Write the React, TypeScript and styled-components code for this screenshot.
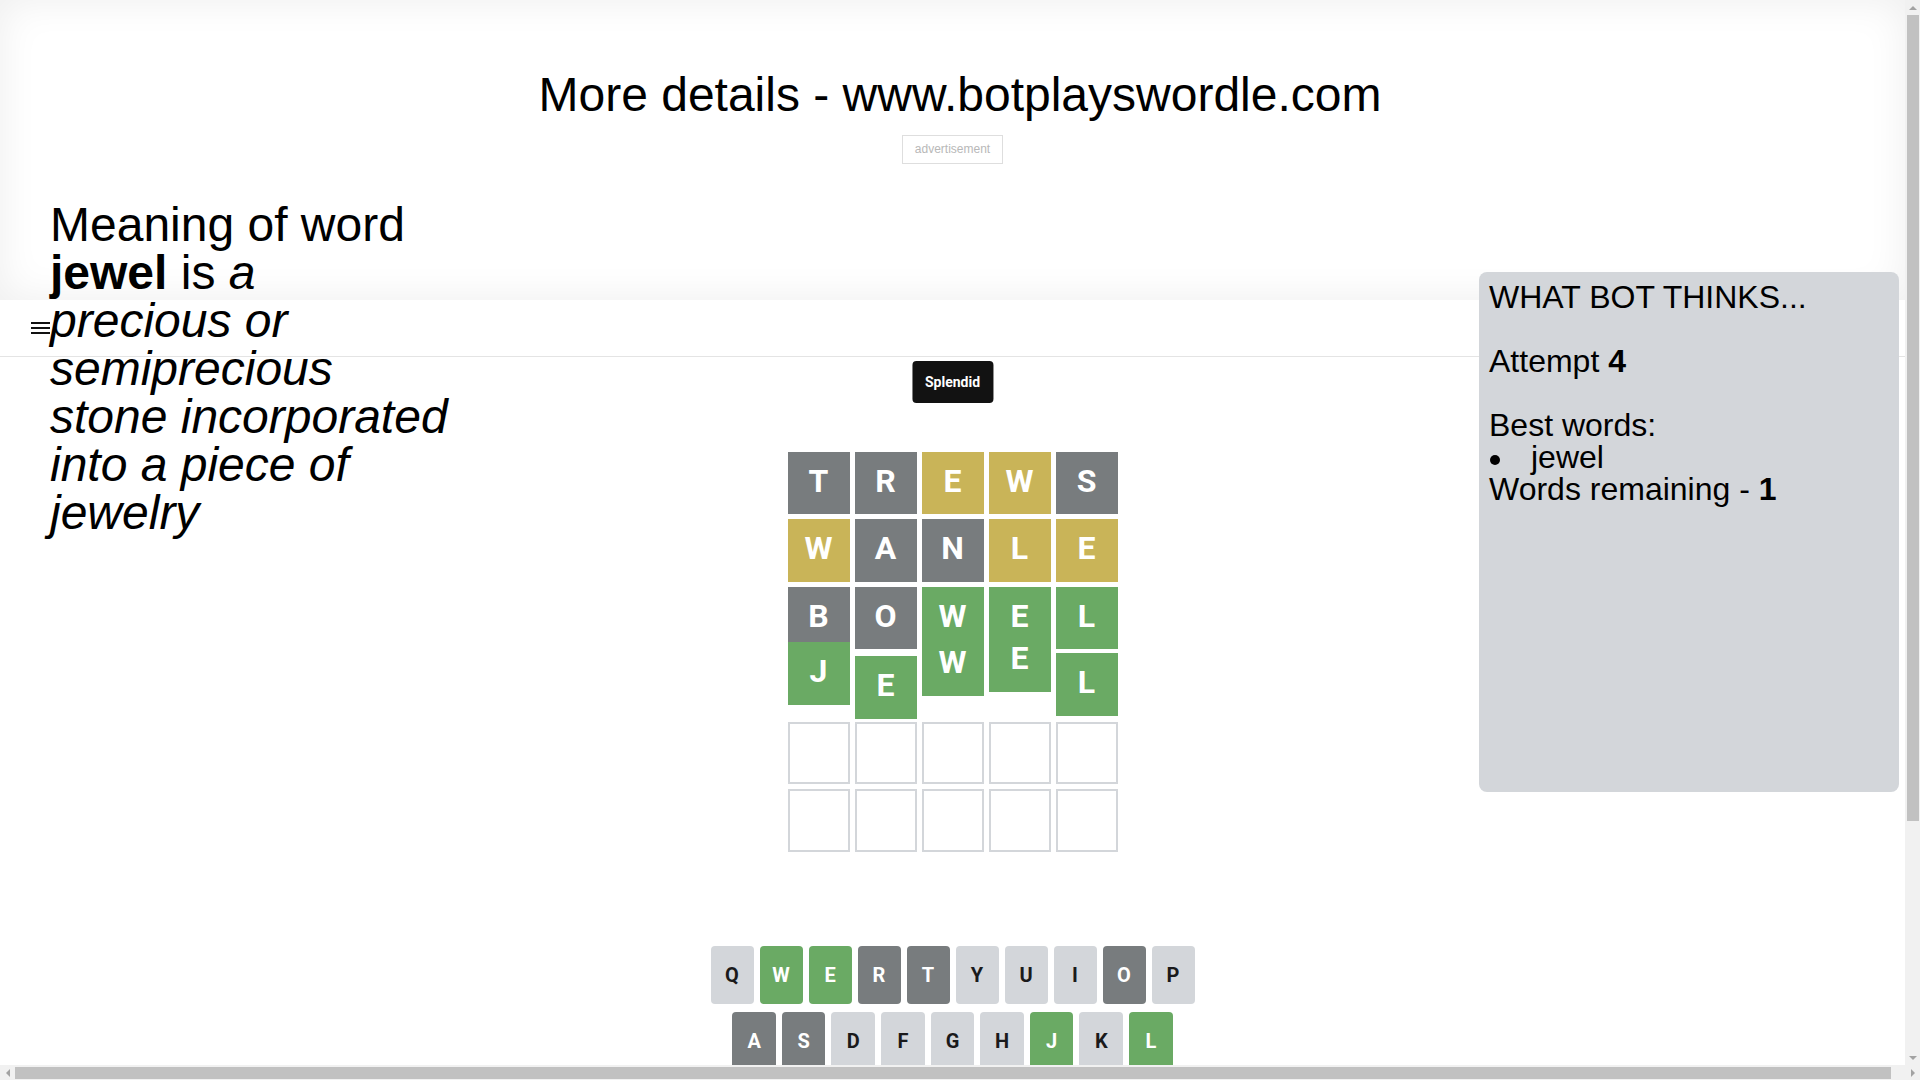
import React from "react";
import styled, { createGlobalStyle } from "styled-components";

type TileState = "absent" | "present" | "correct" | "empty";
type KeyState = "idle" | "absent" | "present" | "correct";

const COLORS = {
  absent: "#787c7e",
  present: "#c9b458",
  correct: "#6aaa64",
  idle: "#d3d6da",
  border: "#d3d6da",
};

const GlobalStyle = createGlobalStyle`
  html, body {
    margin: 0;
    padding: 0;
    overflow: hidden;
  }
  body {
    font-family: "Liberation Sans", Arial, sans-serif;
    color: #000;
    background: #fff;
  }
`;

/* ---------- browser frame with classic scrollbars ---------- */

const Frame = styled.div`
  width: 100vw;
  height: 100vh;
  display: grid;
  grid-template-columns: 1fr 15px;
  grid-template-rows: 1fr 15px;
  grid-template-areas:
    "view vbar"
    "hbar hbar";
  overflow: hidden;
`;

const Viewport = styled.div`
  grid-area: view;
  position: relative;
  overflow: hidden;
  min-width: 0;
  min-height: 0;
`;

const VScrollbar = styled.div`
  grid-area: vbar;
  background: #f1f1f1;
  display: flex;
  flex-direction: column;
`;

const HScrollbar = styled.div`
  grid-area: hbar;
  background: #f1f1f1;
  display: flex;
  flex-direction: row;
`;

const ArrowBtn = styled.div`
  flex: none;
  width: 15px;
  height: 15px;
  display: flex;
  align-items: center;
  justify-content: center;
`;

const VThumb = styled.div`
  flex: none;
  height: 806px;
  margin: 0 1px 0 2px;
  background: #c1c1c1;
`;

const HThumb = styled.div`
  flex: none;
  width: 1876px;
  margin: 2px 0 1px;
  background: #c1c1c1;
`;

const Grow = styled.div`
  flex: 1;
`;

const Arrow = ({ dir }: { dir: "up" | "down" | "left" | "right" }) => {
  const pts = {
    up: "0,4 4,0 8,4",
    down: "0,0 8,0 4,4",
    left: "4,0 4,8 0,4",
    right: "0,0 0,8 4,4",
  }[dir];
  const vertical = dir === "up" || dir === "down";
  return (
    <svg
      width={vertical ? 8 : 4}
      height={vertical ? 4 : 8}
      viewBox={vertical ? "0 0 8 4" : "0 0 4 8"}
      aria-hidden="true"
    >
      <polygon points={pts} fill="#a3a3a3" />
    </svg>
  );
};

/* ---------- page ---------- */

const Page = styled.div`
  position: relative;
  width: 100%;
`;

const TopSection = styled.section`
  height: 300px;
  box-sizing: border-box;
  padding-top: 67px;
  box-shadow: inset 0 0 40px rgba(0, 0, 0, 0.07);
  display: flex;
  flex-direction: column;
`;

const Title = styled.h1`
  width: 100vw;
  flex: none;
  margin: 0;
  font-size: 48px;
  font-weight: normal;
  text-align: center;
  line-height: normal;
  white-space: nowrap;
`;

const AdBox = styled.div`
  align-self: center;
  margin-top: 13px;
  height: 29px;
  box-sizing: border-box;
  padding: 0 12px;
  border: 1px solid #dedede;
  font-size: 12px;
  line-height: 27px;
  color: #b8b8b8;
`;

const Meaning = styled.div`
  position: absolute;
  top: 201px;
  left: 50px;
  width: 399px;
  font-size: 48px;
  line-height: 48px;
  z-index: 2;
`;

const BotPanel = styled.aside`
  position: absolute;
  top: 272px;
  right: 6px;
  width: 420px;
  height: 520px;
  box-sizing: border-box;
  padding: 9px 10px;
  background: #d3d6da;
  border-radius: 8px;
  font-size: 32px;
  line-height: 32px;
  z-index: 2;
`;

const BestList = styled.ul`
  list-style: none;
  margin: 0;
  padding: 0;
`;

const BestItem = styled.li`
  position: relative;
  padding-left: 42px;
  &::before {
    content: "";
    position: absolute;
    left: 1px;
    top: 14px;
    width: 10px;
    height: 10px;
    border-radius: 50%;
    background: #000;
  }
`;

const Game = styled.div`
  position: relative;
  height: 846px;
  display: flex;
  flex-direction: column;
  font-family: Roboto, "Liberation Sans", sans-serif;
`;

const GameHeader = styled.header`
  height: 56px;
  flex: none;
  border-bottom: 1px solid #e4e4e4;
  display: flex;
  align-items: center;
  padding: 0 31px;
`;

const MenuButton = styled.button`
  border: 0;
  background: none;
  padding: 0;
  display: flex;
  cursor: pointer;
`;

const Toast = styled.div`
  position: absolute;
  top: 61px;
  left: 50%;
  transform: translateX(-50%);
  background: #121212;
  color: #fff;
  padding: 13px;
  border-radius: 4px;
  font-size: 14px;
  font-weight: 700;
  z-index: 3;
`;

const BoardContainer = styled.div`
  flex: 1;
  display: flex;
  justify-content: center;
  align-items: center;
`;

const Board = styled.div`
  width: 330px;
  height: 400px;
  display: grid;
  grid-template-rows: repeat(6, 1fr);
  gap: 5px;
`;

const BoardRow = styled.div`
  display: grid;
  grid-template-columns: repeat(5, 1fr);
  gap: 5px;
`;

const Tile = styled.div<{ $state: TileState; $shift: number }>`
  box-sizing: border-box;
  display: flex;
  align-items: center;
  justify-content: center;
  padding-bottom: 4px;
  font-size: 32px;
  font-weight: bold;
  line-height: 1;
  text-transform: uppercase;
  color: #fff;
  background: ${(p) => (p.$state === "empty" ? "#fff" : COLORS[p.$state])};
  border: ${(p) => (p.$state === "empty" ? `2px solid ${COLORS.border}` : "none")};
  transform: translateY(${(p) => p.$shift}px);
`;

const Keyboard = styled.div`
  flex: none;
  height: 200px;
  width: 484px;
  margin: 0 auto;
`;

const KeyRow = styled.div`
  display: flex;
  width: 100%;
  margin: 0 auto 8px;
`;

const Key = styled.button<{ $state: KeyState; $wide?: boolean }>`
  font-family: inherit;
  font-weight: bold;
  font-size: ${(p) => (p.$wide ? "12px" : "20px")};
  border: 0;
  padding: 0;
  margin: 0 6px 0 0;
  height: 58px;
  border-radius: 4px;
  flex: ${(p) => (p.$wide ? 1.5 : 1)};
  display: flex;
  justify-content: center;
  align-items: center;
  text-transform: uppercase;
  background: ${(p) => COLORS[p.$state]};
  color: ${(p) => (p.$state === "idle" ? "#1a1a1b" : "#fff")};
  &:last-of-type {
    margin: 0;
  }
`;

const Half = styled.div`
  flex: 0.5;
`;

type TileData = { l: string; s: TileState; shift?: number };

const t = (word: string, states: string, shifts: number[] = []): TileData[] =>
  word.split("").map((l, i) => ({
    l,
    s: ({ a: "absent", p: "present", c: "correct", e: "empty" } as const)[
      states[i] as "a" | "p" | "c" | "e"
    ],
    shift: shifts[i] ?? 0,
  }));

const BOARD: TileData[][] = [
  t("TREWS", "aappa"),
  t("WANLE", "paapp"),
  t("BOWEL", "aaccc"),
  t("JEWEL", "ccccc", [-12, 2, -21, -25, -1]),
  t("     ", "eeeee"),
  t("     ", "eeeee"),
];

const KEY_STATES: Record<string, KeyState> = {
  W: "correct",
  E: "correct",
  J: "correct",
  L: "correct",
  R: "absent",
  T: "absent",
  O: "absent",
  A: "absent",
  S: "absent",
  N: "absent",
  B: "absent",
};

const ks = (k: string): KeyState => KEY_STATES[k] ?? "idle";

const MenuIcon = () => (
  <svg width="19" height="12" viewBox="0 0 19 12" aria-hidden="true">
    <rect x="0" y="0" width="19" height="2" fill="#111" />
    <rect x="0" y="5" width="19" height="2" fill="#111" />
    <rect x="0" y="10" width="19" height="2" fill="#111" />
  </svg>
);

const BackspaceIcon = () => (
  <svg width="24" height="24" viewBox="0 0 24 24" aria-hidden="true">
    <path
      fill="#1a1a1b"
      d="M22 3H7c-.69 0-1.23.35-1.59.88L0 12l5.41 8.11c.36.53.9.89 1.59.89h15c1.1 0 2-.9 2-2V5c0-1.1-.9-2-2-2zm0 16H7.07L2.4 12l4.66-7H22v14zm-11.59-2L14 13.41 17.59 17 19 15.59 15.41 12 19 8.41 17.59 7 14 10.59 10.41 7 9 8.41 12.59 12 9 15.59z"
    />
  </svg>
);

export default function App() {
  return (
    <Frame>
      <GlobalStyle />
      <Viewport>
        <Page>
          <TopSection>
            <Title>More details - www.botplayswordle.com</Title>
            <AdBox>advertisement</AdBox>
          </TopSection>

          <Meaning>
            Meaning of word <b>jewel</b> is{" "}
            <i>a precious or semiprecious stone incorporated into a piece of jewelry</i>
          </Meaning>

          <BotPanel>
            WHAT BOT THINKS...
            <br />
            <br />
            Attempt <b>4</b>
            <br />
            <br />
            Best words:
            <BestList>
              <BestItem>jewel</BestItem>
            </BestList>
            Words remaining - <b>1</b>
          </BotPanel>

          <Game>
            <GameHeader>
              <MenuButton aria-label="menu">
                <MenuIcon />
              </MenuButton>
            </GameHeader>
            <Toast>Splendid</Toast>
            <BoardContainer>
              <Board>
                {BOARD.map((row, r) => (
                  <BoardRow key={r}>
                    {row.map((tile, c) => (
                      <Tile key={c} $state={tile.s} $shift={tile.shift ?? 0}>
                        {tile.l.trim()}
                      </Tile>
                    ))}
                  </BoardRow>
                ))}
              </Board>
            </BoardContainer>
            <Keyboard>
              <KeyRow>
                {"QWERTYUIOP".split("").map((k) => (
                  <Key key={k} $state={ks(k)}>
                    {k}
                  </Key>
                ))}
              </KeyRow>
              <KeyRow>
                <Half />
                {"ASDFGHJKL".split("").map((k) => (
                  <Key key={k} $state={ks(k)}>
                    {k}
                  </Key>
                ))}
                <Half />
              </KeyRow>
              <KeyRow>
                <Key $state="idle" $wide>
                  Enter
                </Key>
                {"ZXCVBNM".split("").map((k) => (
                  <Key key={k} $state={ks(k)}>
                    {k}
                  </Key>
                ))}
                <Key $state="idle" $wide aria-label="backspace">
                  <BackspaceIcon />
                </Key>
              </KeyRow>
            </Keyboard>
          </Game>
        </Page>
      </Viewport>

      <VScrollbar>
        <ArrowBtn>
          <Arrow dir="up" />
        </ArrowBtn>
        <VThumb />
        <Grow />
        <ArrowBtn>
          <Arrow dir="down" />
        </ArrowBtn>
      </VScrollbar>

      <HScrollbar>
        <ArrowBtn>
          <Arrow dir="left" />
        </ArrowBtn>
        <HThumb />
        <Grow />
        <ArrowBtn>
          <Arrow dir="right" />
        </ArrowBtn>
      </HScrollbar>
    </Frame>
  );
}
